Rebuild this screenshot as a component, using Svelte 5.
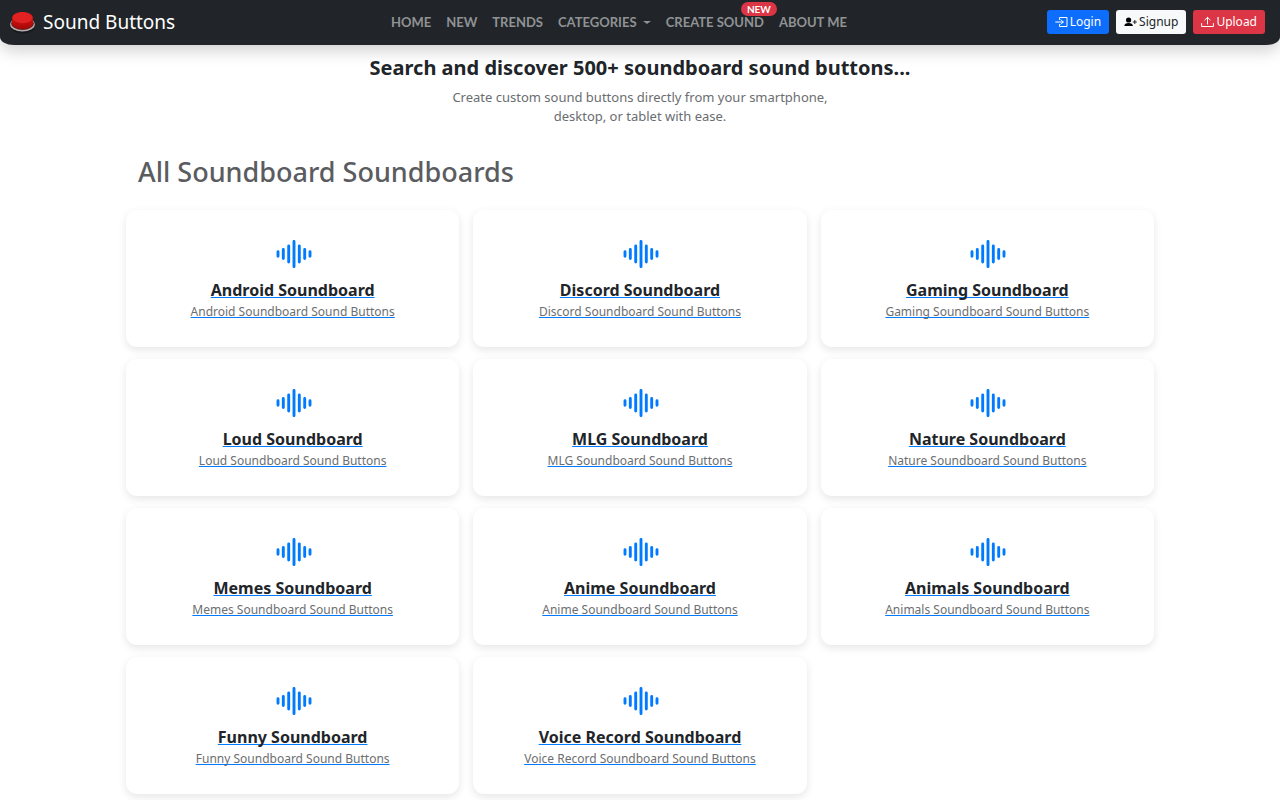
<script lang="ts">
  const navLinks = [
    { href: '#home',       label: 'Home' },
    { href: '#new',        label: 'New' },
    { href: '#trends',     label: 'Trends' },
    { href: '#categories', label: 'Categories', caret: true },
    { href: '#create',     label: 'Create Sound', badge: 'NEW' },
    { href: '#about',      label: 'About Me' },
  ];

  const boards = [
    'Android', 'Discord', 'Gaming', 'Loud', 'MLG', 'Nature',
    'Memes', 'Anime', 'Animals', 'Funny', 'Voice Record',
  ];
</script>

<header>
  <a href="#home" class="brand">
    <svg width="26" height="24" viewBox="0 0 26 24" aria-hidden="true">
      <defs>
        <linearGradient id="dome" x1="0" y1="0" x2="0" y2="1">
          <stop offset="0" stop-color="#e51c1c" />
          <stop offset="1" stop-color="#a80606" />
        </linearGradient>
      </defs>
      <ellipse cx="13" cy="16.500" rx="12" ry="7" fill="#17191c" />
      <ellipse cx="12.500" cy="14.500" rx="12.300" ry="7" fill="#b5b0b0" />
      <ellipse cx="12.500" cy="13.500" rx="11.400" ry="6.400" fill="#6d1d1d" />
      <path d="M2 8.200C2 4.400 6.800 2 12.500 2S23 4.400 23 8.200v4.600c0 3.600-4.800 6.200-10.500 6.200S2 16.400 2 12.800z" fill="url(#dome)" />
      <ellipse cx="12.500" cy="7.800" rx="9.800" ry="5.400" fill="#e02222" />
    </svg>
    <span>Sound Buttons</span>
  </a>

  <nav aria-label="Main navigation">
    {#each navLinks as { href, label, caret, badge }}
      <a {href} class="nav-link">
        {label}
        {#if caret}<span class="caret"></span>{/if}
        {#if badge}<span class="badge">{badge}</span>{/if}
      </a>
    {/each}
  </nav>

  <div class="actions">
    <button class="login">
      <svg width="13" height="12" viewBox="0 0 13 12" fill="none" stroke="currentColor" stroke-linecap="round" stroke-linejoin="round" aria-hidden="true">
        <path d="M4.500 3.500V1.500h7.500v9H4.500v-2M.7 6h7.500M6 3.800L8.200 6 6 8.200" />
      </svg>
      Login
    </button>
    <button class="signup">
      <svg width="13" height="12" viewBox="0 0 13 12" aria-hidden="true">
        <circle cx="4.600" cy="4" r="2.600" />
        <path d="M.3 10c0-2 1.700-3 4.300-3s4.300 1 4.300 3z" />
        <path d="M10.800 4v4M8.800 6h4" stroke="currentColor" fill="none" />
      </svg>
      Signup
    </button>
    <button class="upload">
      <svg width="13" height="12" viewBox="0 0 13 12" fill="none" stroke="currentColor" stroke-linecap="round" stroke-linejoin="round" aria-hidden="true">
        <path d="M.6 7.500v3h11.800v-3M6.500 8V1.500M3.800 4l2.700-2.600L9.200 4" />
      </svg>
      Upload
    </button>
  </div>
</header>

<main>
  <section class="intro">
    <h1>Search and discover 500+ soundboard sound buttons...</h1>
    <p>Create custom sound buttons directly from your smartphone, desktop, or tablet with ease.</p>
  </section>

  <h2>All Soundboard Soundboards</h2>

  <div class="grid">
    {#each boards as name}
      <a href="#{name.toLowerCase().replace(' ', '-')}" class="card">
        <svg width="38" height="28" viewBox="-2 0 38 28" stroke="#007bff" stroke-width="2.900" stroke-linecap="round" aria-hidden="true">
          <path d="M2 11.700v4.600M7.300 9.500v9M12.700 6v16M18 1.400v25.200M23.300 6v16M28.700 9.500v9M34 11.700v4.600" />
        </svg>
        <span class="title">{name} Soundboard</span>
        <span class="subtitle">{name} Soundboard Sound Buttons</span>
      </a>
    {/each}
  </div>
</main>

<style>
  :global(body) {
    background: #fff;
    color: #212529;
    font-family: "Noto Sans", "Open Sans", sans-serif;
  }

  header {
    display: flex;
    align-items: center;
    justify-content: space-between;
    height: 45px;
    box-sizing: border-box;
    padding: 0 15px 2px 10px;
    background: #212529;
    border-radius: 0 0 14px 14px / 0 0 8px 8px;
    box-shadow: 0 6px 16px rgba(0, 0, 0, 0.18);
  }

  .brand {
    display: flex;
    align-items: center;
    gap: 7px;
    color: #fff;
    font-size: 19px;
    line-height: 24px;
    text-decoration: none;
  }

  /* Nav */
  nav {
    display: flex;
    gap: 15px;
    padding-left: 16px;
  }
  .nav-link {
    position: relative;
    color: #909294;
    font-family: Lato, "Noto Sans", sans-serif;
    font-size: 13px;
    font-weight: 700;
    line-height: 18px;
    text-transform: uppercase;
    text-decoration: none;
    white-space: nowrap;
  }
  .caret {
    display: inline-block;
    margin-left: 3px;
    vertical-align: 3px;
    border-top: 3px solid;
    border-left: 4px solid transparent;
    border-right: 4px solid transparent;
  }
  .badge {
    position: absolute;
    top: -11px;
    right: -13px;
    padding: 0 6px;
    border-radius: 8px;
    background: #dc3545;
    color: #fff;
    font-size: 10px;
    line-height: 14px;
  }

  .actions {
    display: flex;
    justify-content: flex-end;
    gap: 7px;
  }
  button {
    display: flex;
    align-items: center;
    gap: 2px;
    height: 24px;
    padding: 0 8px;
    border: 0;
    border-radius: 3px;
    color: #fff;
    font-family: inherit;
    font-size: 12px;
    cursor: pointer;
  }
  .login { background: #0d6efd; }
  .signup { background: #f8f9fa; color: #212529; }
  .upload { background: #dc3545; }

  main {
    max-width: 1028px;
    margin: 0 auto;
    padding: 9px 0 6px;
  }

  .intro {
    text-align: center;
  }
  h1 {
    margin: 0;
    font-size: 20px;
    line-height: 28px;
  }
  .intro p {
    max-width: 420px;
    margin: 6px auto 0;
    color: #6a6d70;
    font-size: 13px;
    line-height: 19px;
  }

  h2 {
    margin: 28px 12px 20px;
    color: #5a5c5f;
    font-size: 27px;
    font-weight: 500;
    line-height: 36px;
  }

  /* Cards */
  .grid {
    display: grid;
    grid-template-columns: repeat(3, 1fr);
    gap: 12px 14px;
  }
  .card {
    display: flex;
    flex-direction: column;
    align-items: center;
    padding: 30px 16px 25px;
    border-radius: 11px;
    background: #fff;
    box-shadow: 0 3px 8px rgba(0, 0, 0, 0.1);
    text-decoration: none;
  }
  .title,
  .subtitle {
    text-decoration: underline;
    text-decoration-color: #007bff;
    text-decoration-thickness: 1px;
    text-decoration-skip-ink: none;
  }
  .title {
    margin-top: 10px;
    color: #212529;
    font-size: 16px;
    font-weight: 700;
    line-height: 24px;
  }
  .subtitle {
    color: #6c6e70;
    font-size: 12px;
    line-height: 20px;
  }
</style>
